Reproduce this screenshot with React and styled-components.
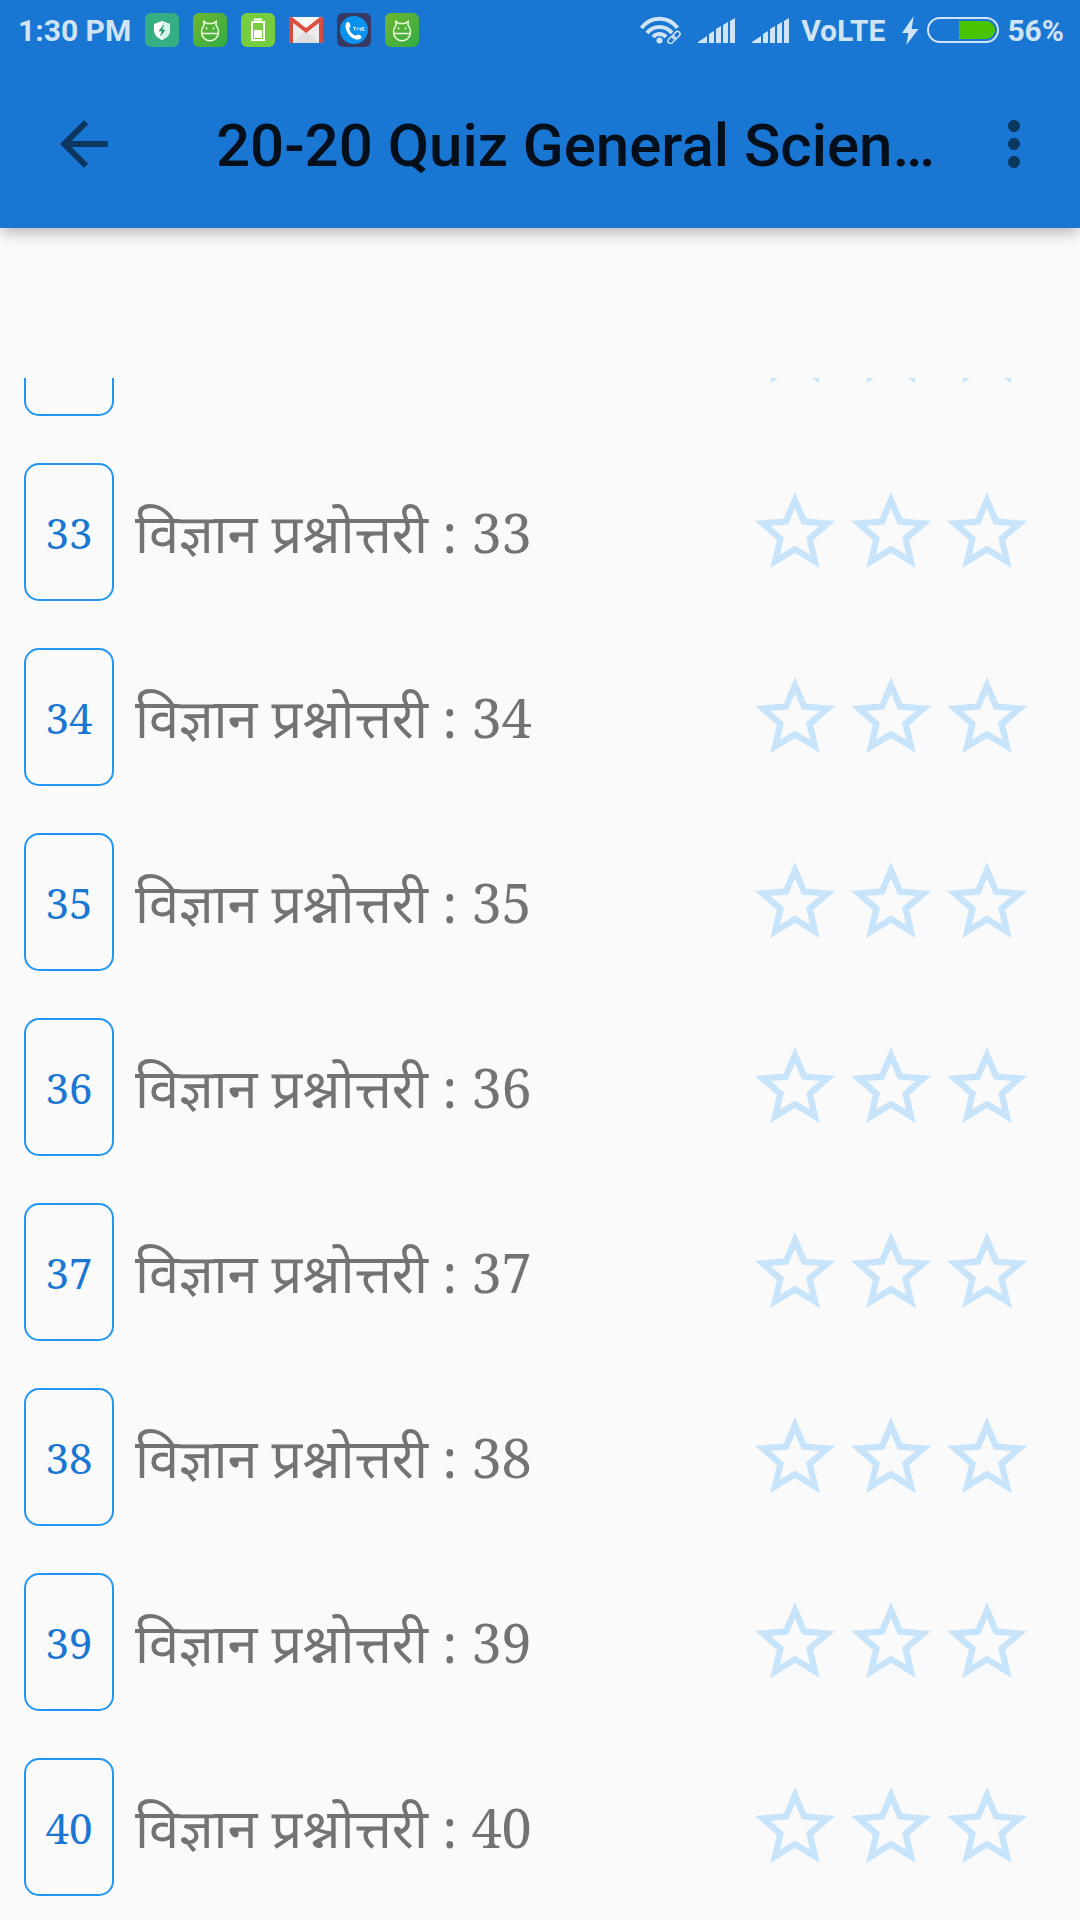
import React from "react";
import styled, { createGlobalStyle } from "styled-components";

const GlobalStyle = createGlobalStyle`
  *, *::before, *::after { box-sizing: border-box; }
  body { margin: 0; background: #fafafa; }
`;

const Screen = styled.div`
  min-height: 100vh;
  display: flex;
  flex-direction: column;
  background: #fafafa;
  font-family: Roboto, "Noto Sans", sans-serif;
`;

const Header = styled.header`
  background: #1976d2;
  box-shadow: 0 6px 12px -3px rgba(0, 0, 0, 0.2), 0 8px 15px rgba(0, 0, 0, 0.1);
`;

const StatusBar = styled.div`
  height: 60px;
  padding: 0 16px 0 18px;
  display: flex;
  align-items: center;
  justify-content: space-between;
  color: #d1e4f6;
`;

const StatusGroup = styled.div`
  display: flex;
  align-items: center;
  gap: ${(p) => p.$gap}px;
`;

const StatusText = styled.span`
  padding-top: 2px;
  font-size: 30px;
  line-height: 36px;
  font-weight: 700;
  white-space: nowrap;
`;

const Glyph = styled.svg`
  display: block;
  flex: none;
`;

const AppBar = styled.div`
  height: 168px;
  padding: 0 30px 0 48px;
  display: flex;
  align-items: center;
`;

const IconButton = styled.button`
  flex: none;
  width: 72px;
  height: 72px;
  padding: 0;
  border: 0;
  background: none;
  color: rgba(0, 0, 0, 0.54);
  cursor: pointer;
`;

const Title = styled.h1`
  flex: 1;
  min-width: 0;
  margin: 0 24px 0 96px;
  padding-top: 4px;
  overflow: hidden;
  white-space: nowrap;
  text-overflow: ellipsis;
  font-size: 60px;
  line-height: 72px;
  font-weight: 500;
  color: rgba(0, 0, 0, 0.87);
`;

const ListViewport = styled.main`
  margin-top: 150px;
  overflow: hidden;
`;

const QuizList = styled.ul`
  list-style: none;
  margin: -124px 0 0;
  padding: 0;
`;

const QuizRow = styled.button`
  width: 100%;
  padding: 24px 45px 23px 24px;
  display: flex;
  align-items: center;
  gap: 21px;
  border: 0;
  background: none;
  text-align: left;
  cursor: pointer;
  font-family: "Noto Serif", "Liberation Serif", serif;
`;

const NumberBox = styled.span`
  flex: none;
  width: 90px;
  height: 138px;
  padding-top: 2px;
  display: flex;
  align-items: center;
  justify-content: center;
  border: 2px solid #2196f3;
  border-radius: 15px;
  font-size: 42px;
  line-height: 60px;
  color: #1976d2;
`;

const QuizName = styled.span`
  flex: 1;
  padding-top: 8px;
  font-size: 54px;
  line-height: 72px;
  color: #737373;
  white-space: nowrap;
`;

const Hindi = styled.span`
  font-family: "Noto Sans Devanagari", "Noto Sans", sans-serif;
`;

const Stars = styled.span`
  display: flex;
  color: #c8e4fb;
`;

function AndroidApp({ id }) {
  return (
    <Glyph width="34" height="34" viewBox="0 0 34 34" aria-hidden="true">
      <defs>
        <linearGradient id={id} x1="0" y1="0" x2="1" y2="1">
          <stop offset="0" stopColor="#6fb52f" />
          <stop offset="1" stopColor="#31ac45" />
        </linearGradient>
      </defs>
      <rect width="34" height="34" rx="6" fill={`url(#${id})`} />
      <path
        d="M8.500 20.500h17M8.500 19c0-3.500 1-5 2.500-6.500L10.800 8.500l3.200 2h6l3.200-2-.2 4c1.500 1.500 2.500 3 2.500 6.500a8.500 8.800 0 0 1-17 0z"
        fill="none"
        stroke="#eaffdf"
        strokeWidth="1.500"
      />
      <circle cx="13.500" cy="15.500" r="1" fill="#eaffdf" />
      <circle cx="20.500" cy="15.500" r="1" fill="#eaffdf" />
    </Glyph>
  );
}

function SecurityApp() {
  return (
    <Glyph width="34" height="34" viewBox="0 0 34 34" aria-hidden="true">
      <rect width="34" height="34" rx="6" fill="#34ae82" />
      <path d="M17 8l8 3v6c0 5-3.500 8-8 10-4.500-2-8-5-8-10v-6z" fill="#fff" />
      <path d="M17 8l8 3v6c0 5-3.500 8-8 10z" fill="#d5f6e8" />
      <path d="M18.500 12l-4.500 6h3l-1.500 5 4.500-6h-3z" fill="#25996f" stroke="#25996f" strokeWidth=".6" />
    </Glyph>
  );
}

function BatteryApp() {
  return (
    <Glyph width="34" height="34" viewBox="0 0 34 34" aria-hidden="true">
      <rect width="34" height="34" rx="6" fill="#76cd3f" />
      <path d="M13 6.500h8" stroke="#fff" strokeWidth="2" />
      <rect x="11" y="9" width="12" height="18" fill="none" stroke="#fff" strokeWidth="2" />
      <path d="M13 17h8v8h-8z" fill="#fff" />
    </Glyph>
  );
}

function GmailApp() {
  return (
    <Glyph width="34" height="34" viewBox="0 0 34 34" aria-hidden="true">
      <rect y="4" width="34" height="26" rx="2" fill="#ececec" />
      <path d="M4 30l13-13 13 13z" fill="#dedede" />
      <path d="M4 4l13 11L30 4z" fill="#f8f8f8" />
      <path d="M0 6a2 2 0 0 1 2-2l2 4v22H2a2 2 0 0 1-2-2zM34 6a2 2 0 0 0-2-2l-2 4v22h2a2 2 0 0 0 2-2z" fill="#d54b3d" />
      <path d="M1 5l16 12.500L33 5" fill="none" stroke="#dd4f40" strokeWidth="4" />
    </Glyph>
  );
}

function CallerApp() {
  return (
    <Glyph width="34" height="34" viewBox="0 0 34 34" aria-hidden="true">
      <rect width="34" height="34" rx="6" fill="#363a63" />
      <circle cx="17" cy="17" r="14" fill="#0a93ee" />
      <path
        d="M9 10.500c1-1.800 2.800-1.800 3.500-.5l1 2.500c.4 1.200-1.500 1.800-1.300 3 .6 3.300 3 6 6 7 1.300.4 2-1.500 3.200-1l2.300 1.200c1.300.8 1 2.500-.7 3.300C16 29 6.500 18 9 10.500z"
        fill="#fff"
      />
      <path d="M16 14.500h3M17.500 14.500v3M20 17.500v-2.500h1.500M23 14.500v3h1v-3M27.500 14.500h-2v3h2M25.500 16h1.500" fill="none" stroke="#d6efff" strokeWidth=".9" />
    </Glyph>
  );
}

function Wifi() {
  return (
    <Glyph width="41" height="28" viewBox="0 0 41 28" fill="none" stroke="currentColor" aria-hidden="true">
      <path d="M1.500 12A22 22 0 0 1 37.500 12M7 17A16 16 0 0 1 32 17M13 21A8.500 8.500 0 0 1 26 21" strokeWidth="4" />
      <circle cx="19.500" cy="24.500" r="3" fill="currentColor" stroke="none" />
      <g transform="rotate(-45 34 21.500)">
        <rect x="24" y="17" width="20" height="9" fill="#1976d2" stroke="none" />
        <rect x="26.500" y="19" width="8.500" height="5" rx="2.500" strokeWidth="1.500" />
        <rect x="33" y="19" width="8.500" height="5" rx="2.500" strokeWidth="1.500" />
      </g>
    </Glyph>
  );
}

function Signal() {
  return (
    <Glyph width="37" height="25" viewBox="0 0 37 25" fill="currentColor" aria-hidden="true">
      <path d="M0 25v-1l9-6v7zM11 25v-9l5-3v12zM18 25V11l5-3v17zM25 25V7l5-3v21zM32 25V3l5-3v25z" />
    </Glyph>
  );
}

function Bolt() {
  return (
    <Glyph width="17" height="29" viewBox="0 0 17 29" fill="currentColor" aria-hidden="true">
      <path d="M11.700 0L0 17h6.500L4.300 29 16.500 13H9.700z" />
    </Glyph>
  );
}

function BatteryLevel() {
  return (
    <Glyph width="72" height="26" viewBox="0 0 72 26" aria-hidden="true">
      <rect x="1" y="1" width="70" height="24" rx="12" fill="none" stroke="#d1e4f6" strokeWidth="2" />
      <path d="M32 4h27a9 9 0 0 1 0 18H32z" fill="#4ac400" />
    </Glyph>
  );
}

function Star() {
  return (
    <Glyph width="96" height="96" viewBox="0 0 24 24" fill="currentColor" aria-hidden="true">
      <path d="M22 9.240l-7.190-.62L12 2 9.190 8.630 2 9.240l5.460 4.730L5.820 21 12 17.270 18.180 21l-1.630-7.030L22 9.240zM12 15.400l-3.760 2.270 1-4.280-3.320-2.880 4.380-.38L12 6.100l1.710 4.040 4.380.38-3.320 2.880 1 4.280L12 15.400z" />
    </Glyph>
  );
}

const firstReadable = 33;
const quizzes = [32, 33, 34, 35, 36, 37, 38, 39, 40];

function Quiz({ number, readable }) {
  return (
    <li>
      <QuizRow aria-label={`Quiz ${number}`}>
        <NumberBox>{readable && number}</NumberBox>
        <QuizName>
          {readable && (
            <>
              <Hindi>विज्ञान प्रश्नोत्तरी</Hindi> : {number}
            </>
          )}
        </QuizName>
        <Stars>
          <Star />
          <Star />
          <Star />
        </Stars>
      </QuizRow>
    </li>
  );
}

export default function App() {
  return (
    <Screen>
      <GlobalStyle />
      <Header>
        <StatusBar>
          <StatusGroup $gap={14}>
            <StatusText>1:30 PM</StatusText>
            <SecurityApp />
            <AndroidApp id="android-first" />
            <BatteryApp />
            <GmailApp />
            <CallerApp />
            <AndroidApp id="android-second" />
          </StatusGroup>
          <StatusGroup $gap={12}>
            <StatusGroup $gap={17}>
              <Wifi />
              <Signal />
              <Signal />
            </StatusGroup>
            <StatusGroup $gap={17}>
              <StatusText>VoLTE</StatusText>
              <StatusGroup $gap={8}>
                <Bolt />
                <BatteryLevel />
                <StatusText>56%</StatusText>
              </StatusGroup>
            </StatusGroup>
          </StatusGroup>
        </StatusBar>
        <AppBar>
          <IconButton aria-label="Back">
            <Glyph width="72" height="72" viewBox="0 0 24 24" fill="currentColor">
              <path d="M20 11H7.830l5.590-5.590L12 4l-8 8 8 8 1.410-1.410L7.830 13H20v-2z" />
            </Glyph>
          </IconButton>
          <Title>20-20 Quiz General Scien…</Title>
          <IconButton aria-label="More options">
            <Glyph width="72" height="72" viewBox="0 0 24 24" fill="currentColor">
              <path d="M12 8c1.100 0 2-.9 2-2s-.9-2-2-2-2 .9-2 2 .9 2 2 2zm0 2c-1.100 0-2 .9-2 2s.9 2 2 2 2-.9 2-2-.9-2-2-2zm0 6c-1.100 0-2 .9-2 2s.9 2 2 2 2-.9 2-2-.9-2-2-2z" />
            </Glyph>
          </IconButton>
        </AppBar>
      </Header>
      <ListViewport>
        <QuizList>
          {quizzes.map((n) => (
            <Quiz key={n} number={n} readable={n >= firstReadable} />
          ))}
        </QuizList>
      </ListViewport>
    </Screen>
  );
}
